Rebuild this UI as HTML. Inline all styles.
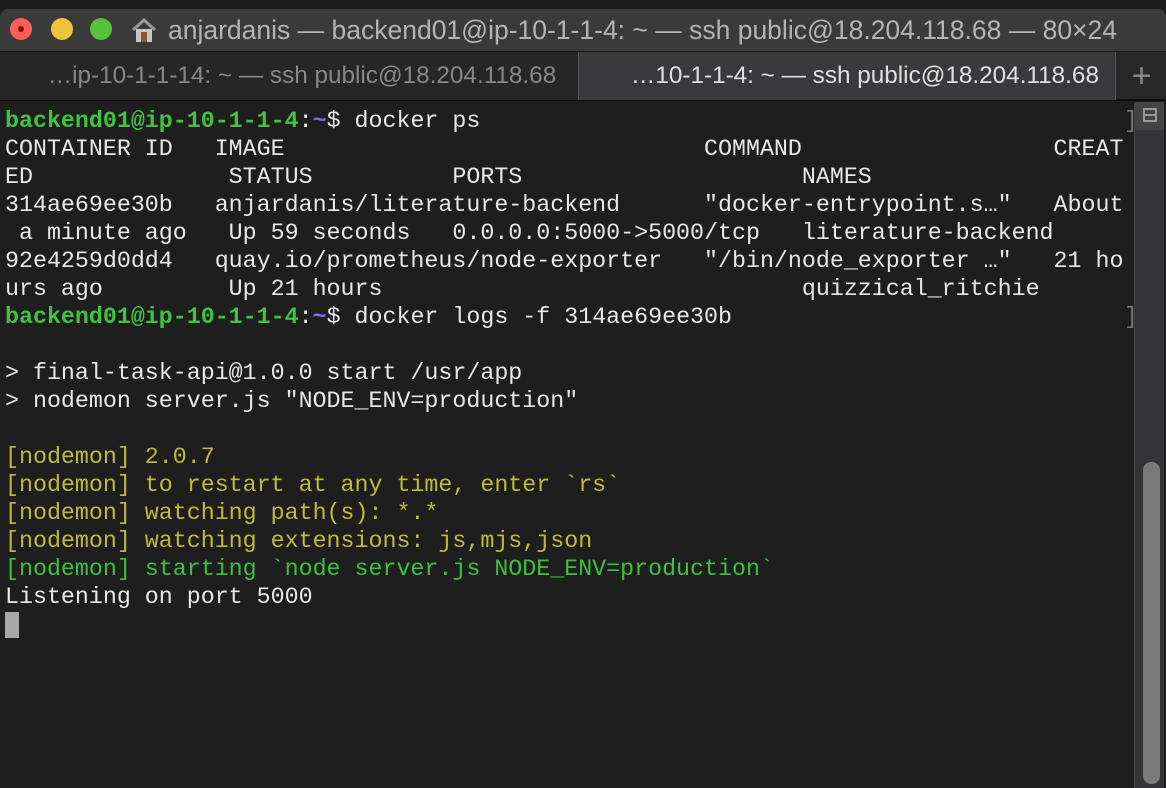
<!DOCTYPE html>
<html><head><style>
*{margin:0;padding:0;box-sizing:border-box}
body{width:1166px;height:788px;background:#1e1e1e;overflow:hidden;position:relative;font-family:"Liberation Sans",sans-serif}
#top{position:absolute;left:0;top:0;width:1166px;height:9px;background:#1a1a1a}
#title{position:absolute;left:0;top:9px;width:1166px;height:42px;background:#3a3a3a;border-radius:8px 8px 0 0}
.dot{position:absolute;top:9px;width:22px;height:22px;border-radius:50%}
#ttext{position:absolute;left:168px;top:6px;color:#b4b4b4;font-size:26.5px;white-space:nowrap}
#tabs{position:absolute;left:0;top:51px;width:1166px;height:50px;background:#282828;border-top:1px solid #1a1a1a;border-bottom:2px solid #0e0e0e}
.tab{position:absolute;top:0;height:48px;font-size:24.3px;line-height:48px;text-align:center;white-space:nowrap}
#term{position:absolute;left:5px;top:107px;font-family:"Liberation Mono",monospace;font-size:23.3px;line-height:28px;color:#e8e8e8;white-space:pre}
.g{color:#3ec43e;font-weight:bold}.b{color:#7b6cff;font-weight:bold}.y{color:#bfbb3a}.n{color:#3cc13c}
#sb{position:absolute;left:1134px;top:102px;width:30px;height:686px;background:#343436;border-left:1px solid #444}
</style></head><body>
<div id="top"></div>
<div id="title">
<div class="dot" style="left:10px;background:#fe5f57"><div style="position:absolute;left:8px;top:8px;width:6px;height:6px;border-radius:50%;background:#8a0d08"></div></div>
<div class="dot" style="left:51px;background:#f0c43a"></div>
<div class="dot" style="left:90px;background:#57c13c"></div>
<svg style="position:absolute;left:131px;top:8px" width="26" height="26" viewBox="0 0 26 26"><path d="M2 13 L13 3 L24 13" fill="none" stroke="#999" stroke-width="3"/><rect x="5" y="12" width="16" height="13" fill="#c8c8c8"/><rect x="10" y="15" width="6" height="10" fill="#8a5a2a"/></svg>
<div id="ttext">anjardanis — backend01@ip-10-1-1-4: ~ — ssh public@18.204.118.68 — 80×24</div>
</div>
<div id="tabs">
<div class="tab" style="left:0;width:578px;color:#888;background:#262626;padding-left:26px">…ip-10-1-1-14: ~ — ssh public@18.204.118.68</div>
<div class="tab" style="left:578px;width:538px;color:#e0e0e0;background:#3a3a3c;border-left:1px solid #555;border-right:1px solid #555;padding-left:36px">…10-1-1-4: ~ — ssh public@18.204.118.68</div>
<div class="tab" style="left:1117px;width:49px;color:#888;font-size:34px;font-weight:300">+</div>
</div>
<div id="term"><span class="g">backend01@ip-10-1-1-4</span>:<span class="b">~</span>$ docker ps
CONTAINER ID   IMAGE                              COMMAND                  CREAT
ED              STATUS          PORTS                    NAMES
314ae69ee30b   anjardanis/literature-backend      "docker-entrypoint.s…"   About
 a minute ago   Up 59 seconds   0.0.0.0:5000-&gt;5000/tcp   literature-backend
92e4259d0dd4   quay.io/prometheus/node-exporter   "/bin/node_exporter …"   21 ho
urs ago         Up 21 hours                              quizzical_ritchie
<span class="g">backend01@ip-10-1-1-4</span>:<span class="b">~</span>$ docker logs -f 314ae69ee30b

&gt; final-task-api@1.0.0 start /usr/app
&gt; nodemon server.js "NODE_ENV=production"

<span class="y">[nodemon] 2.0.7</span>
<span class="y">[nodemon] to restart at any time, enter `rs`</span>
<span class="y">[nodemon] watching path(s): *.*</span>
<span class="y">[nodemon] watching extensions: js,mjs,json</span>
<span class="n">[nodemon] starting `node server.js NODE_ENV=production`</span>
Listening on port 5000
<span style="background:#a8a8a8"> </span></div>
<div style="position:absolute;left:1124px;top:108px;color:#777;font-family:'Liberation Mono';font-size:23px">]</div>
<div style="position:absolute;left:1124px;top:304px;color:#777;font-family:'Liberation Mono';font-size:23px">]</div>
<div id="sb">
<div style="position:absolute;left:0;top:0;width:29px;height:28px;background:#444;"></div>
<div style="position:absolute;left:8px;top:6px;width:14px;height:14px;border:2px solid #999;"><div style="position:absolute;left:0;top:4px;width:10px;height:2px;background:#999"></div></div>
<div style="position:absolute;left:8px;top:360px;width:17px;height:322px;border-radius:8px;background:#7a7a7a"></div>
</div>
</body></html>
